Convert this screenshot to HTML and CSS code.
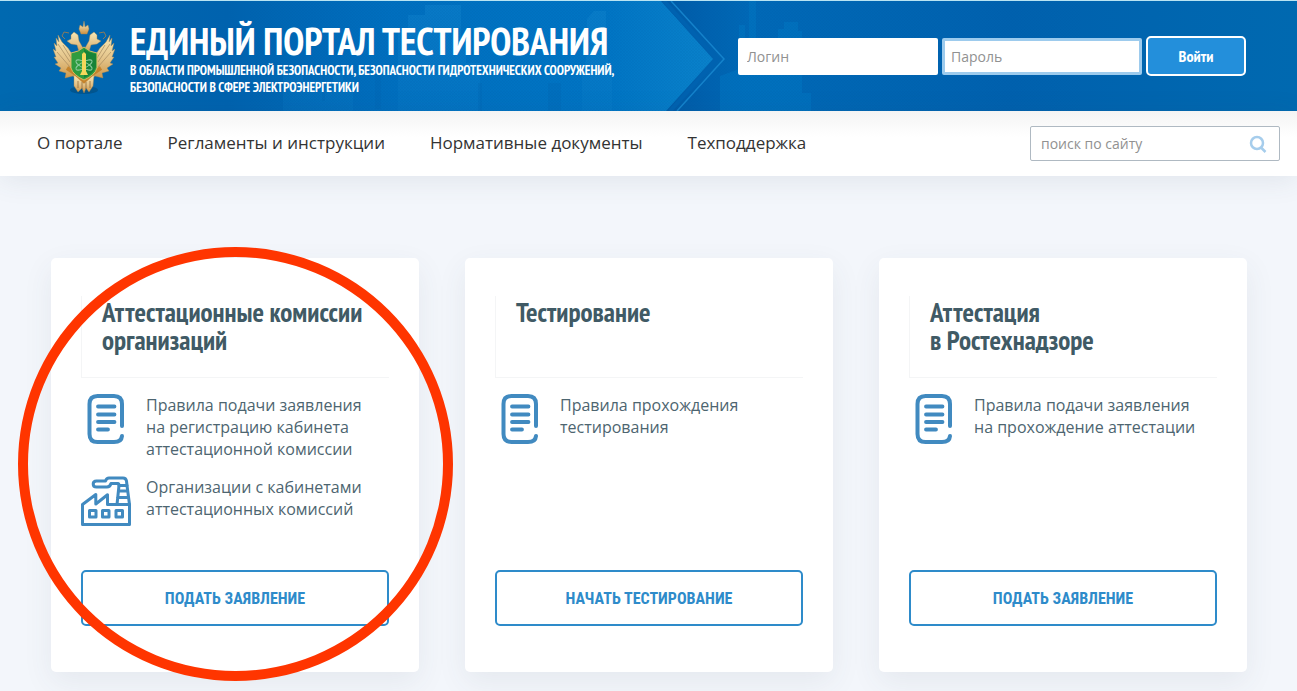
FILE: index.html
```html
<!DOCTYPE html>
<html lang="ru">
<head>
<meta charset="utf-8">
<meta name="viewport" content="width=device-width, initial-scale=1">
<title>Единый портал тестирования</title>
<link rel="stylesheet" href="styles.css">
</head>
<body>
<svg class="defs" width="0" height="0" aria-hidden="true">
  <symbol id="icon-doc" viewBox="0 0 50 50">
    <g fill="none" stroke="#418ac0" stroke-linecap="round" stroke-width="4">
      <path d="M41 32V10Q41 2 33 2H16.500Q8.500 2 8.500 10V40Q8.500 48 16.500 48H33Q40.500 48 41 42"/>
      <path stroke-width="3.800" d="M17 12.500H33.500M17 20.500H33.500M17 28H33.500M17 35.500H27"/>
    </g>
  </symbol>
  <symbol id="icon-factory" viewBox="0 0 50 50">
    <g fill="none" stroke="#418ac0" stroke-width="3" stroke-linejoin="round" stroke-linecap="round">
      <path d="M1.500 48.500V28.500L14.800 18.500V28L26.500 18.800V28.500H48.500V48.500Z"/>
      <path d="M36 28.500L38 9.500H46L48.500 28.500M37.500 15H46.500M36.500 21.500H47.500"/>
      <path d="M46 9.500L45.500 5Q45 2 42 2H28Q25.500 2 24.500 5H15.500Q12.200 5 12.200 8T15.500 11H26Q29 11 30 7.500H37Q38 7.500 38 9.500"/>
      <path d="M8.500 34.500H15V41H8.500ZM21.500 34.500H28V41H21.500ZM35 34.500H41.500V41H35Z"/>
    </g>
  </symbol>
</svg>

<header class="header">
  <svg class="header-art" viewBox="0 0 1297 110" preserveAspectRatio="xMinYMid slice" aria-hidden="true">
    <defs>
      <linearGradient id="base" gradientUnits="userSpaceOnUse" x1="0" y1="0" x2="713" y2="0"><stop offset="0" stop-color="#0069b0"/><stop offset=".32" stop-color="#0062ae"/><stop offset=".55" stop-color="#006fbf"/><stop offset=".85" stop-color="#0075c4"/><stop offset="1" stop-color="#0a82cb"/></linearGradient>
      <linearGradient id="side" gradientUnits="userSpaceOnUse" x1="660" y1="0" x2="1297" y2="0"><stop offset="0" stop-color="#005aa6"/><stop offset=".14" stop-color="#0069b7"/><stop offset=".55" stop-color="#0061ae"/><stop offset="1" stop-color="#0069b0"/></linearGradient>
      <linearGradient id="fade" gradientUnits="userSpaceOnUse" x1="0" y1="0" x2="0" y2="110"><stop offset="0" stop-color="#1487cf" stop-opacity=".4"/><stop offset="1" stop-color="#1487cf" stop-opacity=".15"/></linearGradient>
      <pattern id="mesh" width="3" height="3" patternUnits="userSpaceOnUse"><path d="M0 0l3 3M3 0L0 3" stroke="#004f9d" stroke-width=".5" opacity=".16"/></pattern>
    </defs>
    <path fill="url(#side)" d="M600 0H1297V110H600Z"/>
    <path fill="#0079c5" opacity=".45" d="M739 68V24h6v16h4V0h7v42l22 16V28h6v-7h14v9h4v62h9v18h-91V75z"/>
    <path fill="url(#base)" d="M0 0H661L713 58 666 110H0Z"/>
    <path fill="url(#fade)" d="M283 110V68h12V66h8v14h18V80h12V70h10v10h10v30zM398 110V30h10V14h17V4h36v38h5v20h14v48zM582 110V76l5-22V18l7-8h12v43l6 24v33z"/>
    <path fill="#005eac" opacity=".2" d="M322 100V70h3v30zM375 108V66h6v42zM478 110V82h4v28zM548 82h13v28h-13z"/>
    <path fill="url(#mesh)" d="M250 0H1080V110H250Z"/>
    <path fill="none" stroke="#0062b0" stroke-width="4" d="M664 0L717 58 670 110"/>
    <path fill="none" stroke="#1482cb" stroke-width="1.500" d="M671 0L724 58 677 110"/>
  </svg>
  <a class="brand" href="#">
    <svg class="emblem" viewBox="0 0 62 74" aria-hidden="true">
      <defs><linearGradient id="gold" x1="0" y1="0" x2="0" y2="1"><stop offset="0" stop-color="#f8e8b4"/><stop offset=".5" stop-color="#e4c48a"/><stop offset="1" stop-color="#c99040"/></linearGradient></defs>
      <ellipse cx="31" cy="69" rx="14" ry="4" fill="#044b7c" opacity=".6"/>
      <g fill="url(#gold)" stroke="#a8854f" stroke-width=".4">
        <path d="M24 30L19 33 15 27 9 21 5 14 6 21 3 17 4 25 1 22 3 30 0 28 3 36 1 36 5 42 2 43 8 47 6 50 13 52 12 57 20 55 27 61 31 50Z"/>
        <path d="M38 30L43 33 47 27 53 21 57 14 56 21 59 17 58 25 61 22 59 30 62 28 59 36 61 36 57 42 60 43 54 47 56 50 49 52 50 57 42 55 35 61 31 50Z"/>
        <path d="M21 54L31 59 41 54 40 65 36 71 33 67 31 72 29 67 25 71 21 65Z"/>
        <path d="M27 34L24 24 18 23 14 20 18 18 18 14 21 11 25 14 26 20 30 27 32 27 36 20 37 14 41 11 44 14 44 18 48 20 44 23 38 24 35 34Z"/>
        <path d="M26 8L27 4 30 6 31 0 32 6 35 4 36 8 34 13H28Z"/>
      </g>
      <path fill="none" stroke="#8a7a5c" d="M16 12L11 11 9 15 12 18M46 12L51 11 53 15 50 18"/>
      <path d="M5 23L17 41M4 31L17 46M10 24L18 37M57 23L45 41M58 31L45 46M52 24L44 37" stroke="#a58a5e" stroke-width=".7"/>
      <path d="M14 47L23 53 31 60 39 53 48 47" fill="none" stroke="#c5842d" stroke-width="4"/>
      <path d="M18 32Q26 31 31 26Q36 31 44 32V47Q42 54 31 59Q20 54 18 47Z" fill="#2f9c3f" stroke="#d3bb62"/>
      <path d="M31 28Q36 32 43 33V46Q40 53 31 57Z" fill="#178338"/>
      <g fill="none" stroke="#8dcca0" stroke-width=".9"><ellipse cx="31" cy="44" rx="9" ry="3" transform="rotate(28 31 44)"/><ellipse cx="31" cy="44" rx="9" ry="3" transform="rotate(-28 31 44)"/></g>
      <path d="M29 33L31 31 33 33V50L35 54H27L29 50Z" fill="#f5d85b"/>
      <path d="M25 60V67M29 61V68M33 61V68M37 60V67" stroke="#8f6a38" stroke-width=".8"/>
    </svg>
    <span class="brand-text">
      <span class="brand-title">ЕДИНЫЙ ПОРТАЛ ТЕСТИРОВАНИЯ</span>
      <span class="brand-sub">В ОБЛАСТИ ПРОМЫШЛЕННОЙ БЕЗОПАСНОСТИ, БЕЗОПАСНОСТИ ГИДРОТЕХНИЧЕСКИХ СООРУЖЕНИЙ,<br>БЕЗОПАСНОСТИ В СФЕРЕ ЭЛЕКТРОЭНЕРГЕТИКИ</span>
    </span>
  </a>
  <form class="login">
    <input class="field" type="text" placeholder="Логин" aria-label="Логин">
    <input class="field field-active" type="password" placeholder="Пароль" aria-label="Пароль">
    <button class="login-button" type="button">Войти</button>
  </form>
</header>

<div class="navbar">
  <nav class="nav">
    <a href="#">О портале</a>
    <a href="#">Регламенты и инструкции</a>
    <a href="#">Нормативные документы</a>
    <a href="#">Техподдержка</a>
  </nav>
  <form class="search" role="search">
    <input class="search-input" type="text" placeholder="поиск по сайту" aria-label="поиск по сайту">
    <button class="search-button" type="button" aria-label="Найти">
      <svg viewBox="0 0 18 18" width="18" height="18" aria-hidden="true"><g fill="none" stroke="#a6cdec" stroke-width="2.500"><circle cx="8" cy="8" r="6"/><path d="M12 12.500L16.500 17"/></g></svg>
    </button>
  </form>
</div>

<main class="cards">
  <section class="card">
    <h2 class="card-title">Аттестационные комиссии<br>организаций</h2>
    <ul class="links">
      <li><a href="#"><svg class="icon" aria-hidden="true"><use href="#icon-doc"/></svg><span>Правила подачи заявления<br>на регистрацию кабинета<br>аттестационной комиссии</span></a></li>
      <li><a href="#"><svg class="icon" aria-hidden="true"><use href="#icon-factory"/></svg><span>Организации с кабинетами<br>аттестационных комиссий</span></a></li>
    </ul>
    <button class="action" type="button">ПОДАТЬ ЗАЯВЛЕНИЕ</button>
    <span class="marker" aria-hidden="true"></span>
  </section>
  <section class="card">
    <h2 class="card-title">Тестирование</h2>
    <ul class="links">
      <li><a href="#"><svg class="icon" aria-hidden="true"><use href="#icon-doc"/></svg><span>Правила прохождения<br>тестирования</span></a></li>
    </ul>
    <button class="action" type="button">НАЧАТЬ ТЕСТИРОВАНИЕ</button>
  </section>
  <section class="card">
    <h2 class="card-title">Аттестация<br>в Ростехнадзоре</h2>
    <ul class="links">
      <li><a href="#"><svg class="icon" aria-hidden="true"><use href="#icon-doc"/></svg><span>Правила подачи заявления<br>на прохождение аттестации</span></a></li>
    </ul>
    <button class="action" type="button">ПОДАТЬ ЗАЯВЛЕНИЕ</button>
  </section>
</main>
</body>
</html>
```

FILE: styles.css
```css
* { box-sizing: border-box; }

body {
  margin: 0;
  background: #f3f6fb;
  font-family: "Open Sans", "Noto Sans", sans-serif;
  color: #405a65;
}

a { color: inherit; text-decoration: none; }
button, input { font-family: inherit; }
.defs { position: absolute; }

.header {
  position: relative;
  display: flex;
  align-items: center;
  justify-content: space-between;
  min-height: 111px;
  padding: 0 51px 0 53px;
  border-top: 1px solid #b9e4f3;
  background: #0069b0;
  overflow: hidden;
}
.header-art { position: absolute; inset: 0; width: 100%; height: 100%; }
.brand, .login { position: relative; display: flex; }
.brand { align-items: center; gap: 15px; padding-top: 3px; color: #fff; }
.emblem { width: 62px; height: 74px; flex: none; }
.brand-text {
  display: flex;
  flex-direction: column;
  font-family: "PT Sans Narrow", "Liberation Sans Narrow", "Roboto Condensed", "Open Sans Condensed", "Liberation Sans", sans-serif;
  font-weight: 700;
  white-space: nowrap;
}
.brand-title { font-size: 38px; line-height: 42px; }
.brand-sub { font-size: 13px; line-height: 17px; }

.login { align-items: center; gap: 4px; }
.field {
  width: 200px;
  height: 37px;
  padding: 0 9px;
  border: 0;
  border-radius: 2px;
  background: #fff;
  font-size: 14px;
}
.field-active { padding: 0 6px; border: 3px solid #9dcbed; }
.field::placeholder, .search-input::placeholder { color: #919191; opacity: 1; }
.login-button {
  width: 100px;
  height: 40px;
  border: 2px solid #fff;
  border-radius: 5px;
  background: #238fdb;
  color: #fff;
  font-family: "PT Sans Narrow", "Liberation Sans Narrow", "Roboto Condensed", "Liberation Sans", sans-serif;
  font-size: 16px;
  font-weight: 700;
}

.navbar {
  position: relative;
  display: flex;
  align-items: center;
  justify-content: space-between;
  min-height: 65px;
  padding: 0 17px 0 37px;
  background: linear-gradient(#f4f4f4, #fff 26px);
  box-shadow: 0 4px 28px rgba(60, 75, 95, .1);
}
.nav { display: flex; gap: 45px; padding-bottom: 2px; font-size: 17px; line-height: 24px; color: #333; }
.search {
  display: flex;
  align-items: center;
  width: 250px;
  height: 35px;
  border: 1px solid #afb9c2;
  border-radius: 2px;
  background: #fff;
}
.search-input { flex: 1; min-width: 0; padding: 0 10px; border: 0; background: none; font-size: 14px; }
.search-button { display: flex; padding: 0 12px; border: 0; background: none; }

.cards {
  display: grid;
  grid-template-columns: repeat(3, 1fr);
  gap: 46px;
  padding: 82px 50px 19px 51px;
}
.card {
  position: relative;
  display: flex;
  flex-direction: column;
  min-height: 414px;
  padding: 38px 30px 46px;
  border-radius: 5px;
  background: #fff;
  box-shadow: 0 10px 30px rgba(60, 75, 95, .08);
}
.card-title {
  min-height: 82px;
  margin: 0;
  padding: 2px 0 20px 20px;
  border: solid #f4f5f6;
  border-width: 0 0 1px 1px;
  font-family: "PT Sans Narrow", "Liberation Sans Narrow", "Roboto Condensed", "Liberation Sans", sans-serif;
  font-size: 27px;
  line-height: 28px;
  white-space: nowrap;
}
.links {
  display: flex;
  flex-direction: column;
  gap: 16px;
  margin: 0 0 auto;
  padding: 16px 0 0;
  list-style: none;
}
.links a { display: flex; gap: 15px; font-size: 16px; line-height: 22px; color: #4d6570; }
.icon { flex: none; width: 50px; height: 50px; }
.action {
  height: 56px;
  border: 2px solid #2e8bca;
  border-radius: 5px;
  background: #fff;
  color: #2e8bca;
  font-family: "Roboto Condensed", "Liberation Sans Narrow", "Liberation Sans", sans-serif;
  font-size: 16px;
  font-weight: 700;
}
.marker {
  position: absolute;
  top: -11px;
  left: -33px;
  width: 435px;
  height: 434px;
  border: 10px solid #ff3500;
  border-radius: 50%;
  pointer-events: none;
}
```
